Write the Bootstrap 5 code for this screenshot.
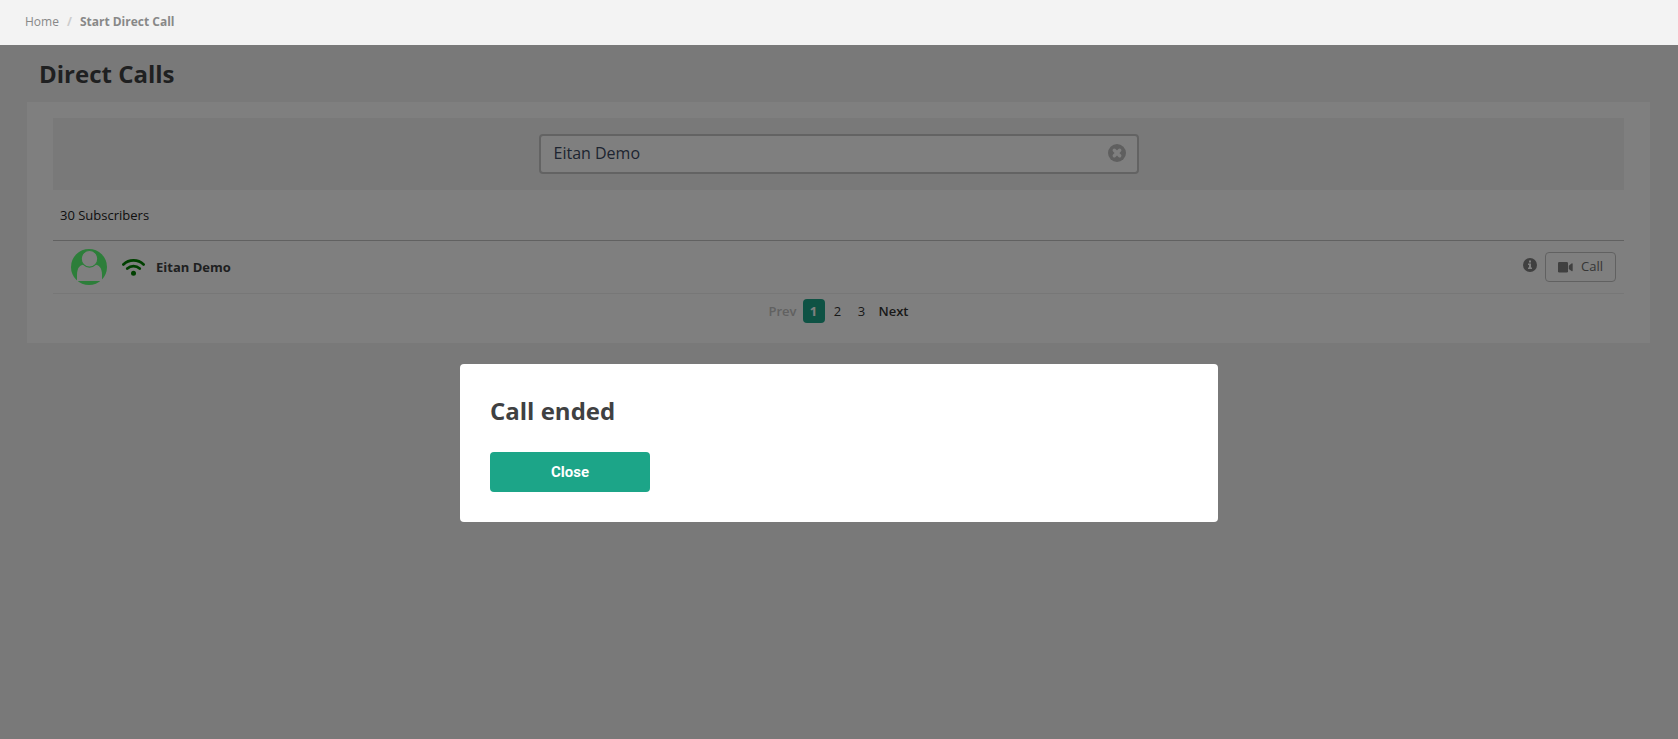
<!DOCTYPE html>
<html lang="en">
<head>
<meta charset="utf-8">
<meta name="viewport" content="width=device-width, initial-scale=1">
<title>Start Direct Call</title>
<link href="https://cdn.jsdelivr.net/npm/bootstrap@5.3.0/dist/css/bootstrap.min.css" rel="stylesheet">
<style>
  :root { --brand: #1ca588; --ink: #3f4142; --page: #f3f3f3; }
  body { font-family: "Open Sans", sans-serif; font-size: 13px; line-height: 20px; color: var(--ink); background: var(--page); }
  .top-strip { height: 45px; padding: 0 25px 2px; background: var(--page); }
  .breadcrumb { font-size: 12px; --bs-breadcrumb-divider-color: #ccc; --bs-breadcrumb-item-active-color: #888; }
  .breadcrumb a { color: #888; }
  .content { padding: 0 28px 0 27px; }
  .page-title, .dialog-title { font-size: 24px; line-height: 32px; font-weight: 700; }
  .page-title { padding: 13px 12px 12px; }
  .panel { background: #fff; padding: 16px 26px 20px; }
  .search-band { background: var(--page); padding: 16px; }
  .search-field { max-width: 600px; }
  .search-field .form-control { height: 40px; padding: 0 44px 2px 13px; border: 2px solid #c6c6c6; border-radius: 4px; font-size: 16px; color: #3d4a63; }
  .clear-btn { right: 13px; top: 10px; line-height: 0; }
  .subs-count { padding: 15px 7px; color: #222; }
  .subs-table { border-top: 1px solid #c2c2c2; }
  .subs-table td { padding: 8px 0; border-bottom: 1px solid #eee; vertical-align: middle; }
  .subscriber { padding-left: 18px; }
  .avatar { margin-right: 15px; }
  .signal { margin-right: 11px; }
  .call-btn { height: 30px; width: 71px; padding: 0; font-size: 13px; color: #6c6c6c; border: 1px solid #c2c2c2; border-radius: 4px; }
  .pager { padding-top: 5px; }
  .pager .page-item { margin: 0 1px; }
  .pager .page-item .page-link { border: 0; border-radius: 4px; padding: 2px 0; min-width: 22px; margin: 0; text-align: center; font-size: 13px; line-height: 20px; background: none; color: #333; }
  .pager .page-item.active .page-link { background: var(--brand); color: #fff; font-weight: 700; }
  .pager .page-item.disabled .page-link { color: #c2c2c2; }
  .pager .page-item.word .page-link { padding: 2px 4px; font-weight: 600; }
  .shade { z-index: 10; background: rgba(0, 0, 0, .5); padding-top: 319px; }
  .dialog { max-width: 758px; background: #fff; border-radius: 4px; padding: 31px 30px 30px; }
  .dialog-title { margin-bottom: 25px; }
  .close-btn { width: 160px; height: 40px; padding: 0; border: 0; border-radius: 4px; background: var(--brand); color: #fff; font-family: Roboto, sans-serif; font-size: 15px; font-weight: 700; }
</style>
</head>
<body class="d-flex flex-column min-vh-100">
<nav class="top-strip d-flex align-items-center" aria-label="breadcrumb">
  <ol class="breadcrumb mb-0">
    <li class="breadcrumb-item"><a href="#" class="text-decoration-none">Home</a></li>
    <li class="breadcrumb-item active fw-bold" aria-current="page">Start Direct Call</li>
  </ol>
</nav>

<div class="position-relative flex-grow-1">
  <main class="content">
    <h1 class="page-title mb-0">Direct Calls</h1>
    <section class="panel">
      <div class="search-band">
        <div class="search-field position-relative mx-auto">
          <input type="text" class="form-control" value="Eitan Demo" aria-label="Search subscribers">
          <button type="button" class="clear-btn btn p-0 border-0 position-absolute" aria-label="Clear">
            <svg width="18" height="18" viewBox="0 0 18 18"><circle cx="9" cy="9" r="9" fill="#bfbfbf"/><path d="M6.300 6.300l5.400 5.400M11.700 6.300l-5.400 5.400" stroke="#fff" stroke-width="3.400" stroke-linecap="round"/></svg>
          </button>
        </div>
      </div>
      <div class="subs-count">30 Subscribers</div>
      <table class="subs-table w-100">
        <tbody>
        <tr>
          <td>
            <div class="subscriber d-flex align-items-center">
              <svg class="avatar" width="36" height="36" viewBox="0 0 36 36" aria-hidden="true">
                <circle cx="18" cy="18" r="18" fill="#5afc74"/>
                <path d="M6 32v-6c0-7 3-10.500 7.500-10.500h10c4.500 0 7.500 3.500 7.500 10.500v6z" fill="#fff"/>
                <circle cx="18.500" cy="9.800" r="8.300" fill="#fff" stroke="#5afc74" stroke-width="1.200"/>
              </svg>
              <svg class="signal" width="23" height="17" viewBox="0 0 23 17" fill="none" stroke="#008000" stroke-width="2.700" stroke-linecap="round" aria-hidden="true">
                <path d="M1.400 5.500C7 .1 16 .1 21.600 5.500M5.300 9.500c3.500-3.200 8.900-3.200 12.400 0"/>
                <circle cx="11.500" cy="14.200" r="2.500" fill="#008000" stroke="none"/>
              </svg>
              <span class="fw-bold">Eitan Demo</span>
            </div>
          </td>
          <td>
            <div class="d-flex justify-content-end align-items-center gap-2 pe-2">
              <svg class="mb-1" width="14" height="14" viewBox="0 0 14 14" role="img" aria-label="Info"><circle cx="7" cy="7" r="7" fill="#808080"/><path d="M6 2.500h2v2H6zM5 5.500h3v4h1V11H5V9.500h1V7H5z" fill="#fff"/></svg>
              <button type="button" class="call-btn btn d-flex align-items-center justify-content-center gap-2">
                <svg width="15" height="11" viewBox="0 0 15 11" fill="#808080" aria-hidden="true"><rect width="10" height="10.500" rx="1.300"/><path d="M10.800 3.700L13.500 1.500q1.200-.6 1.200.6v6.400q0 1.200-1.200.6l-2.700-2.200z"/></svg>
                Call
              </button>
            </div>
          </td>
        </tr>
        </tbody>
      </table>
      <nav aria-label="Subscriber pages">
        <ul class="pager pagination justify-content-center mb-0">
          <li class="page-item word disabled"><a class="page-link" href="#">Prev</a></li>
          <li class="page-item active"><a class="page-link" href="#" aria-current="page">1</a></li>
          <li class="page-item"><a class="page-link" href="#">2</a></li>
          <li class="page-item"><a class="page-link" href="#">3</a></li>
          <li class="page-item word"><a class="page-link" href="#">Next</a></li>
        </ul>
      </nav>
    </section>
  </main>

  <div class="shade position-absolute top-0 start-0 w-100 h-100">
    <div class="dialog mx-auto" role="dialog" aria-modal="true" aria-labelledby="dialogTitle">
      <h2 class="dialog-title" id="dialogTitle">Call ended</h2>
      <button type="button" class="close-btn btn">Close</button>
    </div>
  </div>
</div>
<script src="https://cdn.jsdelivr.net/npm/bootstrap@5.3.0/dist/js/bootstrap.bundle.min.js"></script>
</body>
</html>
